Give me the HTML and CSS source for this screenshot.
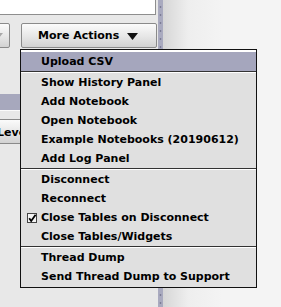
FILE: index.html
```html
<!DOCTYPE html>
<html>
<head>
<meta charset="utf-8">
<link rel="stylesheet" href="styles.css">
</head>
<body>
<div class="app">
  <div class="left">
    <div class="field"></div>
    <div class="toolbar">
      <div class="btn btn-small">
        <svg class="small-caret" width="8" height="6" viewBox="0 0 8 6"><path d="M0 0 H8 L4 5 Z" fill="#a8a8a8"/></svg>
      </div>
      <div class="btn btn-more">
        <span class="btn-label">More Actions</span>
        <svg class="caret" width="11" height="7" viewBox="0 0 11 7"><path d="M0 0 H11 L5.5 7 Z" fill="#111"/></svg>
      </div>
    </div>
    <div class="band"></div>
    <div class="btn btn-level"><span class="level-label">Level</span></div>
  </div>
  <div class="splitter"></div>
  <div class="right"></div>

  <div class="menu">
    <div class="item selected">Upload CSV</div>
    <div class="sep"></div>
    <div class="item">Show History Panel</div>
    <div class="item">Add Notebook</div>
    <div class="item">Open Notebook</div>
    <div class="item">Example Notebooks (20190612)</div>
    <div class="item">Add Log Panel</div>
    <div class="sep"></div>
    <div class="item">Disconnect</div>
    <div class="item">Reconnect</div>
    <div class="item"><svg class="check" width="10" height="10" viewBox="0 0 10 10"><rect x="0.5" y="0.5" width="9" height="9" fill="#f4f4f4" stroke="#444"/><path d="M2.2 5.2 L4.2 8 L8.6 1.8" fill="none" stroke="#000" stroke-width="1.8"/></svg>Close Tables on Disconnect</div>
    <div class="item">Close Tables/Widgets</div>
    <div class="sep"></div>
    <div class="item">Thread Dump</div>
    <div class="item">Send Thread Dump to Support</div>
  </div>
</div>
</body>
</html>
```
FILE: styles.css
```css
* { box-sizing: border-box; }
html, body {
  margin: 0;
  padding: 0;
  width: 281px;
  height: 307px;
  overflow: hidden;
  font-family: "DejaVu Sans", Verdana, sans-serif;
  font-weight: bold;
  font-size: 11px;
  color: #000;
}
.app {
  position: relative;
  display: flex;
  width: 281px;
  height: 307px;
  background: #e8e8e8;
}
.left {
  width: 158px;
  flex: none;
  display: flex;
  flex-direction: column;
  background: #e8e8e8;
  overflow: hidden;
}
.field {
  width: 156px;
  height: 15px;
  background: #fff;
  border-right: 1px solid #8e8e8e;
  border-bottom: 1px solid #8e8e8e;
}
.toolbar {
  display: flex;
  gap: 11px;
  margin-top: 8px;
}
.btn {
  height: 25px;
  border: 1px solid #8a8a8a;
  border-radius: 2px;
  background: linear-gradient(#fbfbfb, #e6e6e6 55%, #d2d2d2);
  display: flex;
  align-items: center;
}
.btn-small {
  width: 30px;
  margin-left: -20px;
  justify-content: flex-end;
  padding-right: 6px;
}
.btn-more {
  width: 136px;
  padding-left: 16px;
  gap: 8px;
}
.btn-label { line-height: 14px; }
.caret { margin-top: 1px; }
.band {
  height: 17px;
  margin-top: 46px;
  background: #a7a8bd;
  border-bottom: 1px solid #fbfbfb;
}
.btn-level {
  margin-top: 8px;
  margin-left: -4px;
  width: 80px;
  padding-top: 2px;
}
.level-label { margin-left: 0; }
.splitter {
  width: 5px;
  flex: none;
  background-color: #a9aabf;
  background-image: radial-gradient(circle, #7c7d96 0.8px, transparent 1.2px);
  background-size: 5px 8px;
  background-position: 0 3px;
}
.right {
  flex: 1;
  background: linear-gradient(90deg, #d6d6d6, #eeeeee 25px, #f4f4f4 60px);
}
.menu {
  position: absolute;
  left: 20px;
  top: 49px;
  width: 237px;
  border: 1px solid #111;
  background: #e0e0e0;
  padding-top: 2px;
  padding-bottom: 1px;
  box-shadow: inset 0 2px 0 #fff;
}
.item {
  height: 19px;
  line-height: 19px;
  padding-left: 20px;
  display: flex;
  align-items: center;
  white-space: nowrap;
}
.item.selected {
  background: #a5a6bd;
}
.sep {
  height: 2px;
  border-top: 1px solid #333;
  background: #fff;
}
.check {
  margin-left: -14px;
  margin-right: 4px;
  flex: none;
}
```
